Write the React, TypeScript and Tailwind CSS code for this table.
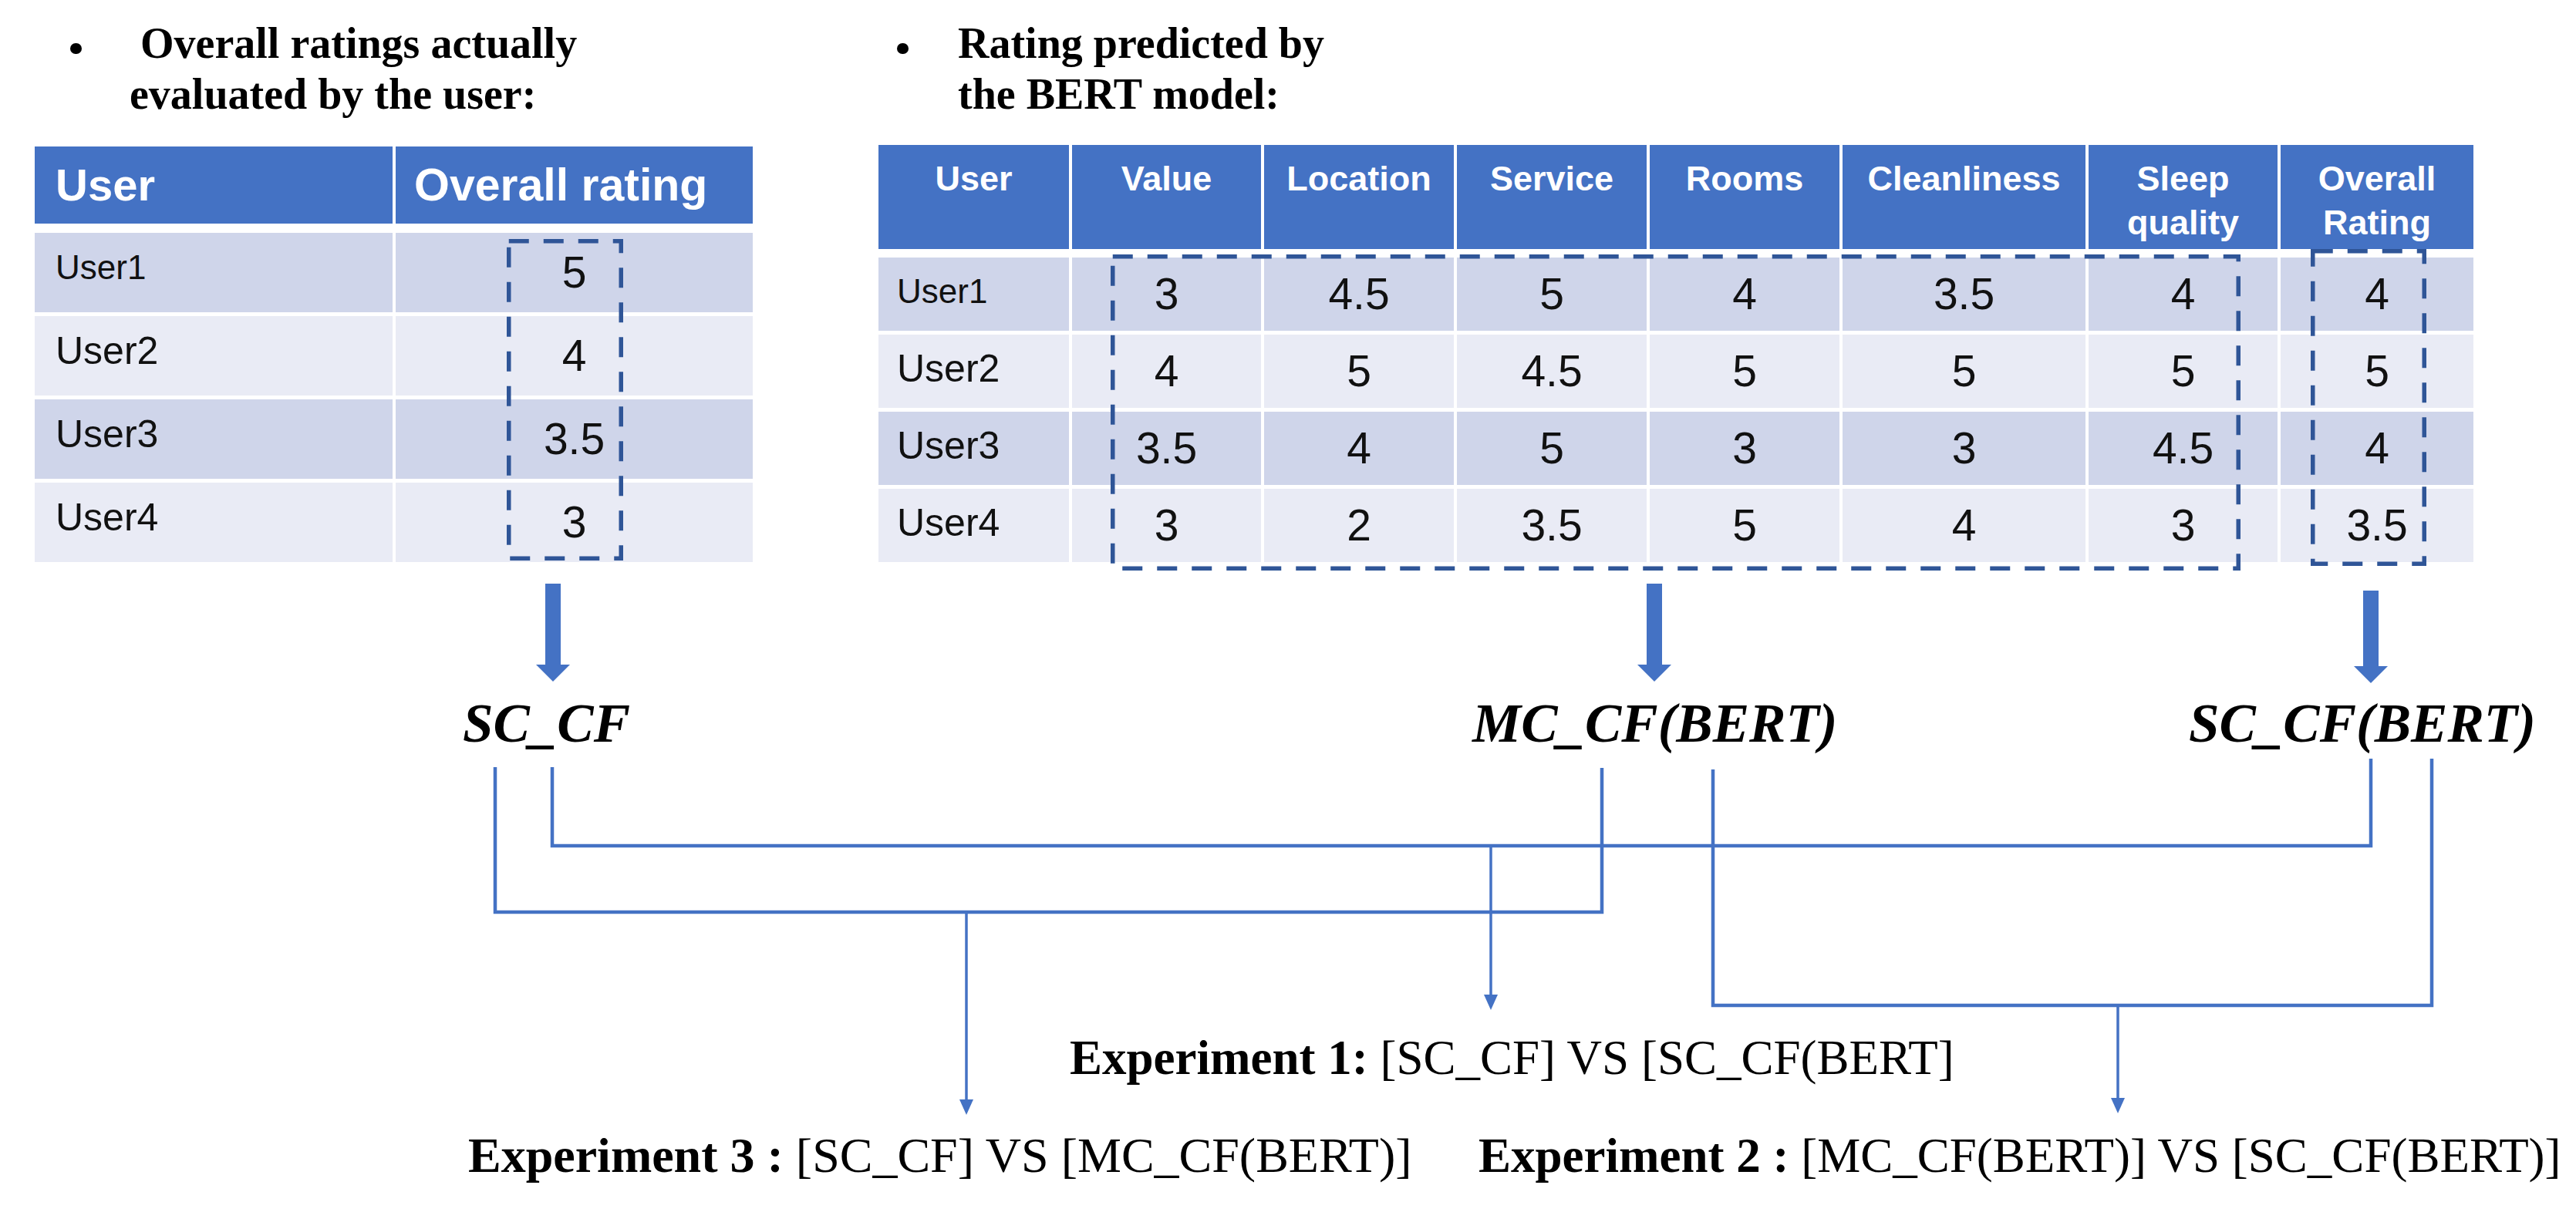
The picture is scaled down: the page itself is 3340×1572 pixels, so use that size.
import React from "react";

const blue = "#4472C4";

const leftRows = [
  { user: "User1", rating: "5" },
  { user: "User2", rating: "4" },
  { user: "User3", rating: "3.5" },
  { user: "User4", rating: "3" },
];

const rightCols = ["User", "Value", "Location", "Service", "Rooms", "Cleanliness", "Sleep quality", "Overall Rating"];

const rightRows = [
  ["User1", "3", "4.5", "5", "4", "3.5", "4", "4"],
  ["User2", "4", "5", "4.5", "5", "5", "5", "5"],
  ["User3", "3.5", "4", "5", "3", "3", "4.5", "4"],
  ["User4", "3", "2", "3.5", "5", "4", "3", "3.5"],
];

const serif = "font-['Liberation_Serif','Times_New_Roman',serif]";
const sans = "font-['Liberation_Sans',Arial,sans-serif]";
const rightGrid = "grid grid-cols-[247px_245px_246px_246px_246px_315px_245px_250px] gap-x-[4px]";

function DashedBox({ className, w, h }: { className: string; w: number; h: number }) {
  return (
    <svg
      className={`absolute pointer-events-none ${className}`}
      width={w}
      height={h}
      viewBox={`0 0 ${w} ${h}`}
    >
      <rect
        x={2.75}
        y={2.75}
        width={w - 5.5}
        height={h - 5.5}
        fill="none"
        stroke="#2F5597"
        strokeWidth={5.5}
        strokeDasharray="26 19"
      />
    </svg>
  );
}

function Bullet() {
  return <div className="w-[15px] h-[14px] rounded-full bg-black shrink-0 mt-[33px]" />;
}

function LeftPanel() {
  return (
    <div className="w-[931px] shrink-0">
      <div className={`flex pl-[46px] ${serif} font-bold text-[56px] leading-[66px] text-black`}>
        <Bullet />
        <div className="ml-[62px] whitespace-nowrap">
          {"\u00A0"}Overall ratings actually
          <br />
          evaluated by the user:
        </div>
      </div>

      <div className={`relative mt-[35px] ${sans}`}>
        <div className="grid grid-cols-[464px_463px] gap-x-[4px] h-[100px]">
          <div className="bg-[#4472C4] flex items-center pl-[27px] text-white font-bold text-[58px] leading-none">
            User
          </div>
          <div className="bg-[#4472C4] flex items-center pl-[24px] text-white font-bold text-[59px] leading-none">
            Overall rating
          </div>
        </div>
        <div className="mt-[12px] flex flex-col gap-y-[5px]">
          {leftRows.map((r, i) => (
            <div key={r.user} className="grid grid-cols-[464px_463px] gap-x-[4px] h-[103px] text-[#111]">
              <div
                className={`flex items-center pl-[27px] pb-[14px] leading-none ${
                  i % 2 === 0 ? "bg-[#CFD5EA]" : "bg-[#E9EBF5]"
                } ${i === 0 ? "text-[44px]" : "text-[50px]"}`}
              >
                {r.user}
              </div>
              <div
                className={`flex items-center justify-center text-[57px] leading-none ${
                  i % 2 === 0 ? "bg-[#CFD5EA]" : "bg-[#E9EBF5]"
                }`}
              >
                {r.rating}
              </div>
            </div>
          ))}
        </div>
        <DashedBox className="left-[612px] top-[120px]" w={151} h={417} />
      </div>
    </div>
  );
}

function RightPanel() {
  return (
    <div className="w-[2068px] shrink-0">
      <div className={`flex pl-[24px] ${serif} font-bold text-[56px] leading-[66px] text-black`}>
        <Bullet />
        <div className="ml-[64px] whitespace-nowrap">
          Rating predicted by
          <br />
          the BERT model:
        </div>
      </div>

      <div className={`relative mt-[33px] ${sans}`}>
        <div className={`${rightGrid} h-[135px]`}>
          {rightCols.map((c) => (
            <div
              key={c}
              className="bg-[#4472C4] text-white font-bold text-[45px] leading-[57px] text-center pt-[15px] px-[10px]"
            >
              {c}
            </div>
          ))}
        </div>
        <div className="mt-[11px] flex flex-col gap-y-[5px]">
          {rightRows.map((row, i) => (
            <div key={row[0]} className={`${rightGrid} h-[95px] text-[#111]`}>
              {row.map((cell, j) =>
                j === 0 ? (
                  <div
                    key={j}
                    className={`flex items-center pl-[24px] pb-[8px] leading-none ${
                      i % 2 === 0 ? "bg-[#CFD5EA]" : "bg-[#E9EBF5]"
                    } ${i === 0 ? "text-[44px]" : "text-[50px]"}`}
                  >
                    {cell}
                  </div>
                ) : (
                  <div
                    key={j}
                    className={`flex items-center justify-center text-[57px] leading-none ${
                      i % 2 === 0 ? "bg-[#CFD5EA]" : "bg-[#E9EBF5]"
                    }`}
                  >
                    {cell}
                  </div>
                )
              )}
            </div>
          ))}
        </div>
        <DashedBox className="left-[301px] top-[142px]" w={1465} h={410} />
        <DashedBox className="left-[1857px] top-[135px]" w={150} h={411} />
      </div>
    </div>
  );
}

function Diagram() {
  return (
    <div className={`relative h-[843px] ${serif} text-black`}>
      <svg className="absolute inset-0" width={3340} height={843} viewBox="0 729 3340 843">
        {/* thick arrows from the tables */}
        <rect x={707} y={757} width={20} height={106} fill={blue} />
        <polygon points="695,862 739,862 717,884" fill={blue} />
        <rect x={2135} y={757} width={20} height={106} fill={blue} />
        <polygon points="2123,862 2167,862 2145,884" fill={blue} />
        <rect x={3064} y={766} width={20} height={99} fill={blue} />
        <polygon points="3052,864 3096,864 3074,886" fill={blue} />

        {/* connectors */}
        <g fill="none" stroke={blue} strokeWidth={4.5}>
          <path d="M716 995 V1097 H3074 V984" />
          <path d="M642 995 V1183 H2077 V996" />
          <path d="M2221 998 V1304 H3153 V984" />
        </g>
        <g fill="none" stroke={blue} strokeWidth={3.5}>
          <path d="M1933 1097 V1292" />
          <path d="M1253 1183 V1428" />
          <path d="M2746 1304 V1426" />
        </g>
        <g fill={blue}>
          <polygon points="1924,1290 1942,1290 1933,1310" />
          <polygon points="1244,1426 1262,1426 1253,1446" />
          <polygon points="2737,1424 2755,1424 2746,1444" />
        </g>
      </svg>

      <div className="absolute left-[600px] top-[174px] text-[71px] leading-none font-bold italic whitespace-nowrap">
        SC_CF
      </div>
      <div className="absolute left-[1909px] top-[174px] text-[71px] leading-none font-bold italic whitespace-nowrap">
        MC_CF(BERT)
      </div>
      <div className="absolute left-[2838px] top-[174px] text-[71px] leading-none font-bold italic whitespace-nowrap">
        SC_CF(BERT)
      </div>

      <div className="absolute left-[1387px] top-[612px] text-[63px] leading-none whitespace-nowrap">
        <span className="font-bold">Experiment 1:</span> [SC_CF] VS [SC_CF(BERT]
      </div>
      <div className="absolute left-[607px] top-[738px] text-[64px] leading-none whitespace-nowrap">
        <span className="font-bold">Experiment 3 :</span> [SC_CF] VS [MC_CF(BERT)]
      </div>
      <div className="absolute left-[1917px] top-[739px] text-[63px] leading-none whitespace-nowrap">
        <span className="font-bold">Experiment 2 :</span> [MC_CF(BERT)] VS [SC_CF(BERT)]
      </div>
    </div>
  );
}

export default function App() {
  return (
    <div className="w-[3340px] h-[1572px] bg-white overflow-hidden">
      <div className="flex items-start pl-[45px] gap-x-[163px] pt-[23px]">
        <LeftPanel />
        <RightPanel />
      </div>
      <Diagram />
    </div>
  );
}
